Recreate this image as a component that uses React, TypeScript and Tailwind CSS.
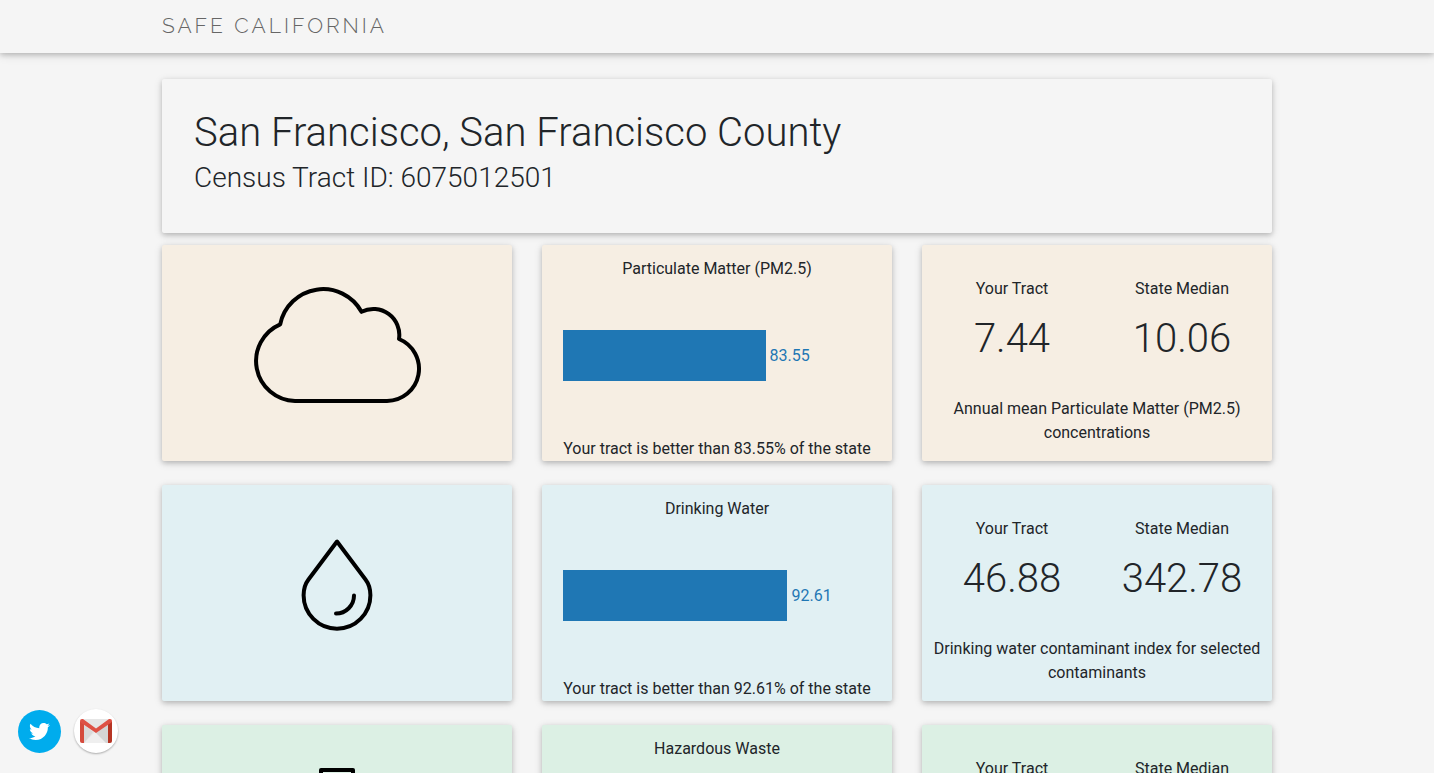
import type { ReactNode } from "react";
import { FaTwitter } from "react-icons/fa";

type Metric = {
  name: string;
  tone: string;
  icon: ReactNode;
  percentile?: number;
  tract?: string;
  median?: string;
  description?: string;
};

const metrics: Metric[] = [
  {
    name: "Particulate Matter (PM2.5)",
    tone: "bg-[#f6eee3]",
    icon: (
      <path d="M58 148A40 40 0 0 1 43.200 71.300A43.800 43.800 0 0 1 124.500 58.800A26 26 0 0 1 162 86A32.200 32.200 0 0 1 150 148Z" />
    ),
    percentile: 83.55,
    tract: "7.44",
    median: "10.06",
    description: "Annual mean Particulate Matter (PM2.5) concentrations",
  },
  {
    name: "Drinking Water",
    tone: "bg-[#e1f0f3]",
    icon: (
      <>
        <path d="M100 48.500L71.500 86.500C68 91 66.600 97 66.600 102.300A33.400 33.400 0 0 0 133.400 102.300C133.400 97 132 91 128.500 86.500Z" />
        <path d="M117 102.500A18 18 0 0 1 99 120.500" />
      </>
    ),
    percentile: 92.61,
    tract: "46.88",
    median: "342.78",
    description: "Drinking water contaminant index for selected contaminants",
  },
  {
    name: "Hazardous Waste",
    tone: "bg-[#dcf0e4]",
    icon: <path d="M84 37H116V52H84ZM88 52V82L58 144Q54 156 66 156H134Q146 156 142 144L112 82V52" />,
  },
];

const raised = "shadow-[0_2px_5px_0_rgba(0,0,0,0.18),0_2px_10px_0_rgba(0,0,0,0.12)]";

function Stat({ label, value }: { label: string; value?: string }) {
  return (
    <div className="flex flex-col">
      <dt>{label}</dt>
      <dd className="mt-3 h-12 text-[40px] leading-[52px] font-light">{value}</dd>
    </div>
  );
}

function MetricRow({ metric }: { metric: Metric }) {
  const card = `h-[216px] rounded-[2px] ${raised} ${metric.tone}`;
  return (
    <section className="grid grid-cols-3 gap-[30px]">
      <div className={`flex items-center justify-center ${card}`}>
        <svg
          viewBox="0 0 200 200"
          className="size-[200px]"
          fill="none"
          stroke="#000"
          strokeWidth="4"
          strokeLinecap="round"
          strokeLinejoin="round"
          aria-hidden="true"
        >
          {metric.icon}
        </svg>
      </div>
      <div className={`flex flex-col pt-3 text-center ${card}`}>
        <h2>{metric.name}</h2>
        {metric.percentile !== undefined && (
          <>
            <div className="mt-[49px] flex h-[51px] items-center gap-1 px-[21px] text-[#1f77b4]">
              <div
                className="h-full bg-[#1f77b4]"
                style={{ width: `${metric.percentile * 0.787}%` }}
              />
              <span>{metric.percentile}</span>
            </div>
            <p className="mt-auto">Your tract is better than {metric.percentile}% of the state</p>
          </>
        )}
      </div>
      <div className={`px-[5px] pt-8 text-center ${card}`}>
        <dl className="grid grid-cols-2">
          <Stat label="Your Tract" value={metric.tract} />
          <Stat label="State Median" value={metric.median} />
        </dl>
        <p className="mt-9">{metric.description}</p>
      </div>
    </section>
  );
}

function GmailIcon() {
  return (
    <svg viewBox="0 0 32 24" className="h-6 w-8" aria-hidden="true">
      <path d="M2 0H30V24H2Z" fill="#e6e6e6" />
      <path d="M4 24L16 12L28 24Z" fill="#efefef" />
      <path d="M16 14L28 5V24H26Z" fill="#d5d5d5" />
      <path d="M4 24L13 13L4 6Z" fill="#dadada" />
      <path d="M0 2V22Q0 24 2 24H4V5Z" fill="#d54b3d" />
      <path d="M32 2V22Q32 24 30 24H28V5Z" fill="#b63524" />
      <path d="M0 2Q0 0 2 0H3L16 9.500L29 0H30Q32 0 32 2Q32 3 31 3.700L16 14L1 3.700Q0 3 0 2Z" fill="#de5145" />
    </svg>
  );
}

export default function App() {
  return (
    <div className="min-h-screen bg-[#f5f5f5] font-['Roboto',sans-serif] text-base leading-6 text-[#212529]">
      <header className={raised}>
        <nav className="mx-auto flex h-[53px] max-w-[1140px] items-center px-[15px] pb-0.5">
          <a
            href="#"
            className="font-['Raleway','Lato',sans-serif] text-[21px] font-light tracking-[3px] text-[#666666] uppercase"
          >
            Safe California
          </a>
        </nav>
      </header>

      <main className="mx-auto max-w-[1140px] px-[15px] pt-[26px] pb-6">
        <div className={`rounded-[2px] px-8 pt-[29px] pb-[35px] ${raised}`}>
          <h1 className="text-[40px] leading-[50px] font-light">San Francisco, San Francisco County</h1>
          <p className="text-[28px] leading-10 font-light">Census Tract ID: 6075012501</p>
        </div>
        <div className="mt-3 flex flex-col gap-6">
          {metrics.map((metric) => (
            <MetricRow key={metric.name} metric={metric} />
          ))}
        </div>
      </main>

      <div className="fixed bottom-5 left-[18px] flex items-end gap-[13px]">
        <a
          href="#twitter"
          aria-label="Share on Twitter"
          className="flex size-[43px] items-center justify-center rounded-full bg-[#00aced] text-white"
        >
          <FaTwitter className="size-[21px]" />
        </a>
        <a
          href="#email"
          aria-label="Share by Gmail"
          className="flex size-11 items-center justify-center rounded-full bg-white shadow-[0_1px_2px_rgba(0,0,0,0.3)]"
        >
          <GmailIcon />
        </a>
      </div>
    </div>
  );
}
